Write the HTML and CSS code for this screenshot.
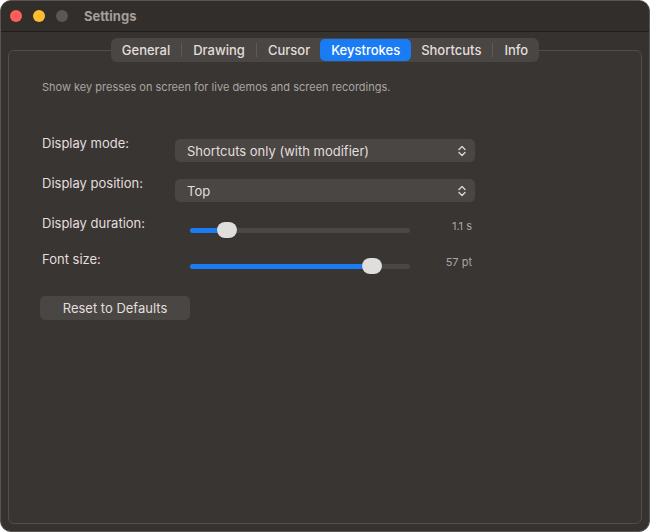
FILE: index.html
```html
<!DOCTYPE html>
<html lang="en">
<head>
    <meta charset="UTF-8">
    <title>Settings</title>
    <link rel="stylesheet" href="styles.css">
</head>
<body>
    <div class="window">
        <div class="titlebar">
            <span class="light red"></span>
            <span class="light yellow"></span>
            <span class="light off"></span>
            <span class="title">Settings</span>
        </div>

        <div class="content">
            <div class="tabs">
                <span class="tab">General</span>
                <span class="sep"></span>
                <span class="tab">Drawing</span>
                <span class="sep"></span>
                <span class="tab">Cursor</span>
                <span class="tab active">Keystrokes</span>
                <span class="tab">Shortcuts</span>
                <span class="sep"></span>
                <span class="tab">Info</span>
            </div>

            <div class="group">
                <p class="description">Show key presses on screen for live demos and screen recordings.</p>

                <div class="row">
                    <label>Display mode:</label>
                    <div class="popup">
                        <span>Shortcuts only (with modifier)</span>
                        <svg class="chevron" width="8" height="12" viewBox="0 0 8 12"><path d="M1 4.5 L4 1.5 L7 4.5 M1 7.5 L4 10.5 L7 7.5" fill="none" stroke="#d8d4d2" stroke-width="1.4" stroke-linecap="round" stroke-linejoin="round"/></svg>
                    </div>
                </div>

                <div class="row">
                    <label>Display position:</label>
                    <div class="popup">
                        <span>Top</span>
                        <svg class="chevron" width="8" height="12" viewBox="0 0 8 12"><path d="M1 4.5 L4 1.5 L7 4.5 M1 7.5 L4 10.5 L7 7.5" fill="none" stroke="#d8d4d2" stroke-width="1.4" stroke-linecap="round" stroke-linejoin="round"/></svg>
                    </div>
                </div>

                <div class="row">
                    <label>Display duration:</label>
                    <div class="slider">
                        <div class="track">
                            <div class="fill" style="width: 37px"></div>
                            <div class="thumb" style="left: 37px"></div>
                        </div>
                        <span class="value">1.1 s</span>
                    </div>
                </div>

                <div class="row">
                    <label>Font size:</label>
                    <div class="slider">
                        <div class="track">
                            <div class="fill" style="width: 182px"></div>
                            <div class="thumb" style="left: 182px"></div>
                        </div>
                        <span class="value">57 pt</span>
                    </div>
                </div>

                <button class="reset">Reset to Defaults</button>
            </div>
        </div>
    </div>
</body>
</html>
```

FILE: styles.css
```css
body {
    margin: 0;
    background-color: #fff;
    font-family: Inter, "Noto Sans", sans-serif;
}
.window {
    box-sizing: border-box;
    width: 650px;
    height: 532px;
    border: 1px solid #5a5653;
    border-radius: 11px;
    background-color: #363230;
    overflow: hidden;
    display: flex;
    flex-direction: column;
}
.titlebar {
    height: 30px;
    flex: none;
    display: flex;
    align-items: center;
    padding-left: 9px;
    background-color: #322e2c;
    border-bottom: 1px solid #201e1d;
}
.light {
    width: 12px;
    height: 12px;
    border-radius: 50%;
    margin-right: 11px;
}
.red { background-color: #ff5f57; }
.yellow { background-color: #febc2e; }
.off { background-color: #5b5754; }
.title {
    margin-left: 5px;
    font-size: 13px;
    font-weight: 700;
    color: #a39f9c;
}
.content {
    flex: 1;
    display: flex;
    flex-direction: column;
    padding: 6px 7px 7px 7px;
}
.tabs {
    align-self: center;
    position: relative;
    z-index: 1;
    display: flex;
    align-items: center;
    height: 24px;
    padding: 0 1px;
    margin-bottom: -12px;
    background-color: #4a4644;
    border-radius: 6px;
    font-size: 13px;
    font-weight: 500;
    color: #e2dedc;
}
.tab {
    padding: 0 10px;
    line-height: 22px;
    border-radius: 5px;
}
.tab.active {
    background-color: #1a7cf5;
    color: #fff;
    padding: 0 11px;
}
.sep {
    width: 1px;
    height: 14px;
    background-color: #5e5a57;
    margin: 0 1px;
}
.group {
    flex: 1;
    border: 1px solid #524e4b;
    border-radius: 6px;
    background-color: #393533;
    padding: 29px 33px 0 33px;
}
.description {
    margin: 0 0 41px 0;
    font-size: 11px;
    line-height: 14px;
    color: #a9a5a2;
}
.row {
    display: flex;
    align-items: flex-start;
    margin-bottom: 13px;
}
label {
    width: 133px;
    flex: none;
    font-size: 13px;
    line-height: 16px;
    color: #e2dedc;
}
.popup {
    width: 300px;
    height: 23px;
    margin-top: 4px;
    box-sizing: border-box;
    display: flex;
    align-items: center;
    justify-content: space-between;
    padding: 0 9px 0 12px;
    background-color: #4a4644;
    border-radius: 5px;
    font-size: 13px;
    color: #e2dedc;
}
.slider {
    display: flex;
    align-items: center;
    height: 16px;
    margin-top: 7px;
}
.track {
    position: relative;
    width: 220px;
    height: 5px;
    margin-left: 15px;
    border-radius: 3px;
    background-color: #4b4745;
}
.fill {
    height: 5px;
    border-radius: 3px;
    background-color: #1a7cf5;
}
.thumb {
    position: absolute;
    top: -6px;
    width: 20px;
    height: 16px;
    margin-left: -10px;
    border-radius: 8px;
    background-color: #e0dedd;
    box-shadow: 0 0 1px rgba(0,0,0,0.4);
}
.value {
    width: 62px;
    text-align: right;
    font-size: 11px;
    color: #a9a5a2;
    margin-top: -8px;
}
.reset {
    margin-top: 9px;
    margin-left: -2px;
    width: 150px;
    height: 24px;
    border: none;
    border-radius: 5px;
    background-color: #4a4644;
    font-family: Inter, "Noto Sans", sans-serif;
    font-size: 13px;
    color: #e2dedc;
}
```
